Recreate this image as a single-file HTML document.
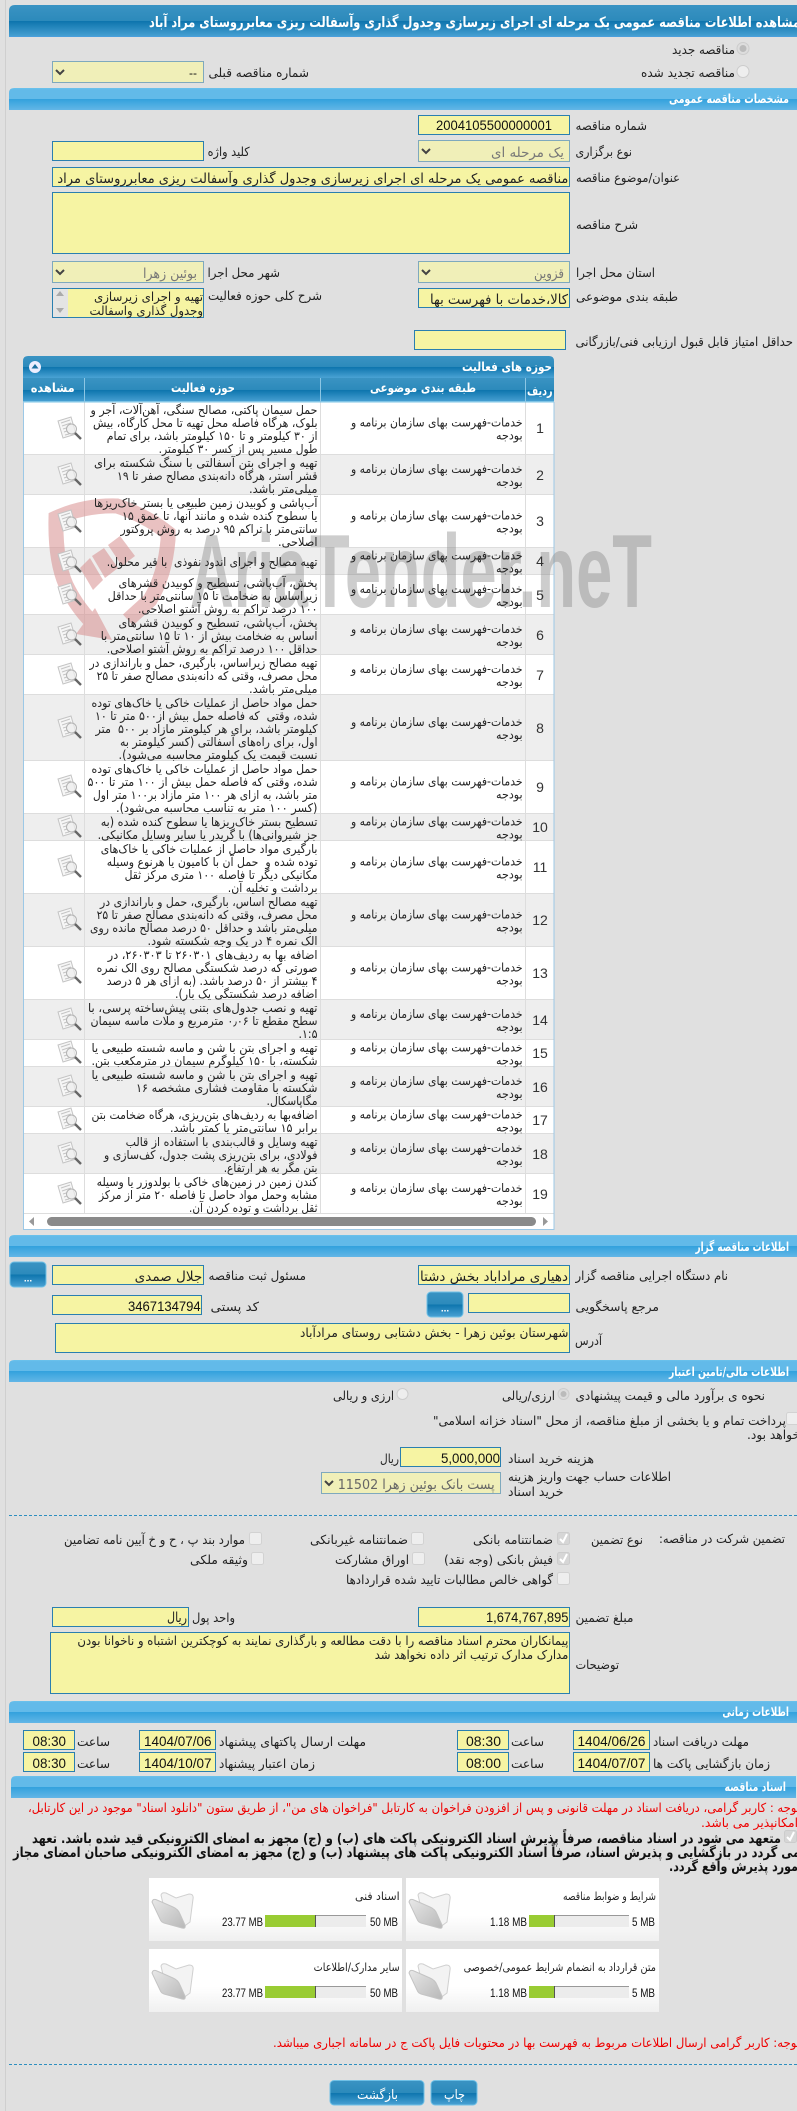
<!DOCTYPE html>
<html lang="fa">
<head>
<meta charset="utf-8">
<title>مشاهده اطلاعات مناقصه عمومی</title>
<style>
html,body{margin:0;padding:0;background:#e0e0e0;width:797px;height:2111px;overflow:hidden}
svg{display:block;position:absolute;left:0;top:0}
text{font-family:"DejaVu Sans",sans-serif;font-size:12.5px;fill:#222;direction:rtl;white-space:pre}
.m{font-size:12px}
.b{font-size:13.5px}
.g{font-size:13.5px;fill:#777}
.w{fill:#fff;font-weight:bold;font-size:12.5px}
.r{fill:#e00;font-size:12.5px}
.k{font-weight:bold;font-size:13.5px;fill:#111}
.c{font-size:11.5px}
.l{font-family:"Liberation Sans",sans-serif;font-size:14px;direction:ltr;fill:#111}
.n{font-family:"Liberation Sans",sans-serif;font-size:14px;direction:ltr;text-anchor:middle;fill:#333}
.s{font-family:"Liberation Sans",sans-serif;font-size:12px;direction:ltr;fill:#111}
.i{fill:#f6f4a3;stroke:#2a7fb0;stroke-width:1}
.d{fill:#f0efb8;stroke:#7fa9bd;stroke-width:1}
.cb{fill:#eee;stroke:#d2d2d2;stroke-width:1}
.ck{fill:#d6d6d6;stroke:#ccc;stroke-width:1}
.ch{fill:none;stroke:#444;stroke-width:2}
.tick{fill:none;stroke:#fff;stroke-width:2}
.wm{font-family:"Liberation Sans",sans-serif;font-weight:bold;font-size:104px;direction:ltr;fill:#888;fill-opacity:.42}
.dots{direction:ltr;text-anchor:middle;font-size:10px;font-weight:bold;fill:#fff;font-family:"Liberation Sans",sans-serif}
</style>
</head>
<body>
<svg xmlns="http://www.w3.org/2000/svg" width="797" height="2111" viewBox="0 0 797 2111">
<defs>
<linearGradient id="gd" x1="0" y1="0" x2="0" y2="1">
<stop offset="0" stop-color="#3a93c3"/><stop offset=".5" stop-color="#2c8abb"/><stop offset=".5" stop-color="#0c74ad"/><stop offset="1" stop-color="#4aa2d4"/>
</linearGradient>
<linearGradient id="gl" x1="0" y1="0" x2="0" y2="1">
<stop offset="0" stop-color="#6cc2ec"/><stop offset=".08" stop-color="#62bae9"/><stop offset=".5" stop-color="#62bae9"/><stop offset=".5" stop-color="#32a1dd"/><stop offset="1" stop-color="#62b6e6"/>
</linearGradient>
<linearGradient id="gc" x1="0" y1="0" x2="0" y2="1">
<stop offset="0" stop-color="#fff"/><stop offset=".6" stop-color="#fff"/><stop offset="1" stop-color="#f0f0f0"/>
</linearGradient>
<linearGradient id="gf" x1="0" y1="0" x2="1" y2="1">
<stop offset="0" stop-color="#e8e8e8"/><stop offset="1" stop-color="#b8b8b8"/>
</linearGradient>
<symbol id="doc" viewBox="0 0 25 23" width="25" height="23" overflow="visible">
<path d="M1 4 L14 0 L19 17 L6 21Z" fill="#f6f6f6" stroke="#c4c4c4"/>
<path d="M4 6 L13 3 M5 9 L14 6 M6 12 L11 10.5 M7 15 L10 14 M8 18 L12 17" stroke="#c4c4c4" fill="none"/>
<circle cx="14.5" cy="12" r="5" fill="#eee" fill-opacity=".7" stroke="#b4b4b4"/>
<path d="M18 16 L24 22" stroke="#666" stroke-width="2.4"/>
</symbol>
<symbol id="fold" viewBox="0 0 42 37" width="42" height="37" overflow="visible">
<path d="M9 3 Q10 0 14 1 L24 6 L37 2 Q42 2 41 7 L38 30 L30 36 L12 16Z" fill="#f3f3f3" stroke="#d0d0d0"/>
<path d="M0 10 Q1 6 5 8 L21 15 Q26 17 28 22 L33 33 Q34 37 30 36 L12 31 Q9 30 8 27 Z" fill="url(#gf)" stroke="#c4c4c4"/>
</symbol>
</defs>

<rect x="5" y="0" width="1" height="2111" fill="#cfcfcf"/>

<!-- title bar -->
<path d="M9 37V11Q9 5 15 5H797V37Z" fill="url(#gd)"/>
<rect x="9" y="36" width="788" height="1" fill="#4a9fdc"/>
<text x="800" y="27" class="w" style="font-size:14.5px" textLength="651" lengthAdjust="spacingAndGlyphs">مشاهده اطلاعات مناقصه عمومی یک مرحله ای اجرای زیرسازی وجدول گذاری وآسفالت ریزی معابرروستای مراد آباد</text>

<circle cx="743" cy="48.5" r="6" fill="#ddd" stroke="#ccc"/><circle cx="743" cy="48.5" r="3.5" fill="#bbb"/>
<text x="735" y="54" textLength="63" lengthAdjust="spacingAndGlyphs">مناقصه جدید</text>
<circle cx="743" cy="71.5" r="6" fill="#eee" stroke="#ccc"/>
<text x="735" y="77" textLength="94" lengthAdjust="spacingAndGlyphs">مناقصه تجدید شده</text>
<rect class="d" x="52.5" y="61.5" width="151" height="21"/>
<polyline class="ch" points="56,70 60,74 64,70"/>
<text x="197" y="77" class="s" style="direction:rtl">--</text>
<text x="309" y="77" textLength="100.5" lengthAdjust="spacingAndGlyphs">شماره مناقصه قبلی</text>

<!-- section 1 -->
<path d="M9 110V93Q9 88 14 88H797V110Z" fill="url(#gl)"/>
<text x="789" y="103" class="w" textLength="120" lengthAdjust="spacingAndGlyphs">مشخصات مناقصه عمومی</text>

<rect class="i" x="418.5" y="115.5" width="151" height="19"/>
<text x="436" y="130" class="l" textLength="116" lengthAdjust="spacingAndGlyphs">2004105500000001</text>
<text x="647" y="130" textLength="71.5" lengthAdjust="spacingAndGlyphs">شماره مناقصه</text>

<rect class="d" x="418.5" y="140.5" width="151" height="21"/>
<polyline class="ch" points="422,149 426,153 430,149"/>
<text x="564" y="157" class="g" textLength="73" lengthAdjust="spacingAndGlyphs">یک مرحله ای</text>
<text x="632" y="156" textLength="56.5" lengthAdjust="spacingAndGlyphs">نوع برگزاری</text>
<rect class="i" x="52.5" y="141.5" width="151" height="19"/>
<text x="249.6" y="156" textLength="42" lengthAdjust="spacingAndGlyphs">کلید واژه</text>

<rect class="i" x="52.5" y="167.5" width="517" height="19"/>
<text x="568.4" y="183" class="b" textLength="511" lengthAdjust="spacingAndGlyphs">مناقصه عمومی یک مرحله ای اجرای زیرسازی وجدول گذاری وآسفالت ریزی معابرروستای مراد</text>
<text x="680" y="182" textLength="104" lengthAdjust="spacingAndGlyphs">عنوان/موضوع مناقصه</text>

<rect class="i" x="52.5" y="192.5" width="517" height="61"/>
<text x="638" y="229" textLength="62" lengthAdjust="spacingAndGlyphs">شرح مناقصه</text>

<rect class="d" x="418.5" y="261.5" width="151" height="21"/>
<polyline class="ch" points="422,270 426,274 430,270"/>
<text x="564" y="278" class="g" textLength="30" lengthAdjust="spacingAndGlyphs">قزوین</text>
<text x="655" y="277" textLength="79" lengthAdjust="spacingAndGlyphs">استان محل اجرا</text>
<rect class="d" x="52.5" y="261.5" width="151" height="21"/>
<polyline class="ch" points="56,270 60,274 64,270"/>
<text x="197" y="278" class="g" textLength="54" lengthAdjust="spacingAndGlyphs">بوئین زهرا</text>
<text x="280" y="277" textLength="72.5" lengthAdjust="spacingAndGlyphs">شهر محل اجرا</text>

<rect class="i" x="418.5" y="288.5" width="151" height="19"/>
<text x="568" y="304" class="b" textLength="138" lengthAdjust="spacingAndGlyphs">کالا،خدمات با فهرست بها</text>
<text x="678" y="301" textLength="102" lengthAdjust="spacingAndGlyphs">طبقه بندی موضوعی</text>
<rect class="i" x="52.5" y="288.5" width="151" height="29"/>
<rect x="53" y="289" width="15" height="28" fill="#e4e4e4"/>
<path d="M60 291 L64 296 H56Z M56 308 H64 L60 313Z" fill="#aaa"/>
<text x="203" y="301" textLength="109" lengthAdjust="spacingAndGlyphs">تهیه و اجرای زیرسازی</text>
<text x="203" y="315" textLength="113.5" lengthAdjust="spacingAndGlyphs">وجدول گذاری واسفالت</text>
<text x="322" y="300" textLength="114" lengthAdjust="spacingAndGlyphs">شرح کلی حوزه فعالیت</text>

<rect class="i" x="414.5" y="330.5" width="151" height="19"/>
<text x="793" y="346" textLength="217.5" lengthAdjust="spacingAndGlyphs">حداقل امتیاز قابل قبول ارزیابی فنی/بازرگانی</text>

<!-- activities panel -->
<rect x="23" y="402" width="531" height="827" fill="#fff"/>
<rect x="23" y="455" width="531" height="40" fill="#eee"/>
<rect x="23" y="548" width="531" height="27" fill="#eee"/>
<rect x="23" y="615" width="531" height="40" fill="#eee"/>
<rect x="23" y="695" width="531" height="66" fill="#eee"/>
<rect x="23" y="814" width="531" height="27" fill="#eee"/>
<rect x="23" y="894" width="531" height="53" fill="#eee"/>
<rect x="23" y="1000" width="531" height="40" fill="#eee"/>
<rect x="23" y="1067" width="531" height="40" fill="#eee"/>
<rect x="23" y="1134" width="531" height="40" fill="#eee"/>
<path d="M23 454.5H554M23 494.5H554M23 547.5H554M23 574.5H554M23 614.5H554M23 654.5H554M23 694.5H554M23 760.5H554M23 813.5H554M23 840.5H554M23 893.5H554M23 946.5H554M23 999.5H554M23 1039.5H554M23 1066.5H554M23 1106.5H554M23 1133.5H554M23 1173.5H554M23 1213.5H554" stroke="#ddd" fill="none"/>
<path d="M84.5 402V1214M320.5 402V1214M525.5 402V1214" stroke="#ddd" fill="none"/>
<path d="M23 378V361Q23 356 28 356H549Q554 356 554 361V378Z" fill="url(#gd)"/>
<rect x="23" y="378" width="531" height="24" fill="url(#gd)"/>
<rect x="23" y="401" width="531" height="1.5" fill="#7fc4e6"/>
<path d="M84.5 378V402M320.5 378V402M525.5 378V402" stroke="#8cc6e4" fill="none"/>
<rect x="23" y="402" width="1" height="828" fill="#9cc8e6"/>
<rect x="553.5" y="402" width="1" height="828" fill="#9cc8e6"/>
<rect x="23" y="1229" width="531" height="1" fill="#9cc8e6"/>
<circle cx="35" cy="367" r="6" fill="#eef"/>
<path d="M35 364 L38.5 368.5 H31.5Z" fill="#1b6f9f"/>
<text x="552" y="371" class="w" textLength="90" lengthAdjust="spacingAndGlyphs">حوزه های فعالیت</text>
<text x="74.7" y="392" class="w" textLength="44" lengthAdjust="spacingAndGlyphs">مشاهده</text>
<text x="235" y="392" class="w" textLength="64" lengthAdjust="spacingAndGlyphs">حوزه فعالیت</text>
<text x="476" y="392" class="w" textLength="106" lengthAdjust="spacingAndGlyphs">طبقه بندی موضوعی</text>
<text x="552.6" y="395" class="w" textLength="25.6" lengthAdjust="spacingAndGlyphs">ردیف</text>

<!-- watermark -->
<g opacity=".55">
<path d="M128 620 L150 600 Q165 575 168 540 L168 533 Q145 515 117 506 Q85 505 56 518 Q55 560 66 585 Q78 610 97 627" fill="none" stroke="#d88f8f" stroke-width="15"/>
<polygon points="112,640 76,634 95,608" fill="#d88f8f"/>
<polygon points="80,568 90,558 103,580 93,590" fill="#d88f8f"/>
<polygon points="92,556 104,548 118,568 105,578" fill="#d88f8f"/>
<polygon points="108,545 120,536 135,556 122,566" fill="#d88f8f"/>
</g>
<text x="190" y="607" class="wm" textLength="118" lengthAdjust="spacingAndGlyphs">Aria</text>
<text x="310" y="607" class="wm" textLength="342" lengthAdjust="spacingAndGlyphs">Tender.neT</text>

<!-- table icons -->
<use href="#doc" x="57" y="417"/>
<use href="#doc" x="57" y="463"/>
<use href="#doc" x="57" y="510"/>
<use href="#doc" x="57" y="550"/>
<use href="#doc" x="57" y="583"/>
<use href="#doc" x="57" y="623"/>
<use href="#doc" x="57" y="663"/>
<use href="#doc" x="57" y="716"/>
<use href="#doc" x="57" y="775"/>
<use href="#doc" x="57" y="815"/>
<use href="#doc" x="57" y="855"/>
<use href="#doc" x="57" y="908"/>
<use href="#doc" x="57" y="961"/>
<use href="#doc" x="57" y="1008"/>
<use href="#doc" x="57" y="1041"/>
<use href="#doc" x="57" y="1075"/>
<use href="#doc" x="57" y="1108"/>
<use href="#doc" x="57" y="1142"/>
<use href="#doc" x="57" y="1182"/>

<!-- row numbers -->
<text x="540" y="433" class="n">1</text>
<text x="540" y="480" class="n">2</text>
<text x="540" y="526" class="n">3</text>
<text x="540" y="566" class="n">4</text>
<text x="540" y="600" class="n">5</text>
<text x="540" y="640" class="n">6</text>
<text x="540" y="680" class="n">7</text>
<text x="540" y="733" class="n">8</text>
<text x="540" y="792" class="n">9</text>
<text x="540" y="832" class="n">10</text>
<text x="540" y="872" class="n">11</text>
<text x="540" y="925" class="n">12</text>
<text x="540" y="978" class="n">13</text>
<text x="540" y="1025" class="n">14</text>
<text x="540" y="1058" class="n">15</text>
<text x="540" y="1092" class="n">16</text>
<text x="540" y="1125" class="n">17</text>
<text x="540" y="1159" class="n">18</text>
<text x="540" y="1199" class="n">19</text>

<!-- category column -->
<g class="cat">
<text class="m" x="522.6" y="426.5" textLength="171.6" lengthAdjust="spacingAndGlyphs">خدمات-فهرست بهای سازمان برنامه و</text><text class="m" x="522.6" y="439.5" textLength="26.6" lengthAdjust="spacingAndGlyphs">بودجه</text>
<text class="m" x="522.6" y="473" textLength="171.6" lengthAdjust="spacingAndGlyphs">خدمات-فهرست بهای سازمان برنامه و</text><text class="m" x="522.6" y="486" textLength="26.6" lengthAdjust="spacingAndGlyphs">بودجه</text>
<text class="m" x="522.6" y="519.5" textLength="171.6" lengthAdjust="spacingAndGlyphs">خدمات-فهرست بهای سازمان برنامه و</text><text class="m" x="522.6" y="532.5" textLength="26.6" lengthAdjust="spacingAndGlyphs">بودجه</text>
<text class="m" x="522.6" y="559.5" textLength="171.6" lengthAdjust="spacingAndGlyphs">خدمات-فهرست بهای سازمان برنامه و</text><text class="m" x="522.6" y="572.5" textLength="26.6" lengthAdjust="spacingAndGlyphs">بودجه</text>
<text class="m" x="522.6" y="593" textLength="171.6" lengthAdjust="spacingAndGlyphs">خدمات-فهرست بهای سازمان برنامه و</text><text class="m" x="522.6" y="606" textLength="26.6" lengthAdjust="spacingAndGlyphs">بودجه</text>
<text class="m" x="522.6" y="633" textLength="171.6" lengthAdjust="spacingAndGlyphs">خدمات-فهرست بهای سازمان برنامه و</text><text class="m" x="522.6" y="646" textLength="26.6" lengthAdjust="spacingAndGlyphs">بودجه</text>
<text class="m" x="522.6" y="673" textLength="171.6" lengthAdjust="spacingAndGlyphs">خدمات-فهرست بهای سازمان برنامه و</text><text class="m" x="522.6" y="686" textLength="26.6" lengthAdjust="spacingAndGlyphs">بودجه</text>
<text class="m" x="522.6" y="726" textLength="171.6" lengthAdjust="spacingAndGlyphs">خدمات-فهرست بهای سازمان برنامه و</text><text class="m" x="522.6" y="739" textLength="26.6" lengthAdjust="spacingAndGlyphs">بودجه</text>
<text class="m" x="522.6" y="785.5" textLength="171.6" lengthAdjust="spacingAndGlyphs">خدمات-فهرست بهای سازمان برنامه و</text><text class="m" x="522.6" y="798.5" textLength="26.6" lengthAdjust="spacingAndGlyphs">بودجه</text>
<text class="m" x="522.6" y="825.5" textLength="171.6" lengthAdjust="spacingAndGlyphs">خدمات-فهرست بهای سازمان برنامه و</text><text class="m" x="522.6" y="838.5" textLength="26.6" lengthAdjust="spacingAndGlyphs">بودجه</text>
<text class="m" x="522.6" y="865.5" textLength="171.6" lengthAdjust="spacingAndGlyphs">خدمات-فهرست بهای سازمان برنامه و</text><text class="m" x="522.6" y="878.5" textLength="26.6" lengthAdjust="spacingAndGlyphs">بودجه</text>
<text class="m" x="522.6" y="918.5" textLength="171.6" lengthAdjust="spacingAndGlyphs">خدمات-فهرست بهای سازمان برنامه و</text><text class="m" x="522.6" y="931.5" textLength="26.6" lengthAdjust="spacingAndGlyphs">بودجه</text>
<text class="m" x="522.6" y="971.5" textLength="171.6" lengthAdjust="spacingAndGlyphs">خدمات-فهرست بهای سازمان برنامه و</text><text class="m" x="522.6" y="984.5" textLength="26.6" lengthAdjust="spacingAndGlyphs">بودجه</text>
<text class="m" x="522.6" y="1018" textLength="171.6" lengthAdjust="spacingAndGlyphs">خدمات-فهرست بهای سازمان برنامه و</text><text class="m" x="522.6" y="1031" textLength="26.6" lengthAdjust="spacingAndGlyphs">بودجه</text>
<text class="m" x="522.6" y="1051.5" textLength="171.6" lengthAdjust="spacingAndGlyphs">خدمات-فهرست بهای سازمان برنامه و</text><text class="m" x="522.6" y="1064.5" textLength="26.6" lengthAdjust="spacingAndGlyphs">بودجه</text>
<text class="m" x="522.6" y="1085" textLength="171.6" lengthAdjust="spacingAndGlyphs">خدمات-فهرست بهای سازمان برنامه و</text><text class="m" x="522.6" y="1098" textLength="26.6" lengthAdjust="spacingAndGlyphs">بودجه</text>
<text class="m" x="522.6" y="1118.5" textLength="171.6" lengthAdjust="spacingAndGlyphs">خدمات-فهرست بهای سازمان برنامه و</text><text class="m" x="522.6" y="1131.5" textLength="26.6" lengthAdjust="spacingAndGlyphs">بودجه</text>
<text class="m" x="522.6" y="1152" textLength="171.6" lengthAdjust="spacingAndGlyphs">خدمات-فهرست بهای سازمان برنامه و</text><text class="m" x="522.6" y="1165" textLength="26.6" lengthAdjust="spacingAndGlyphs">بودجه</text>
<text class="m" x="522.6" y="1192" textLength="171.6" lengthAdjust="spacingAndGlyphs">خدمات-فهرست بهای سازمان برنامه و</text><text class="m" x="522.6" y="1205" textLength="26.6" lengthAdjust="spacingAndGlyphs">بودجه</text>
</g>

<!-- activity column -->
<text class="m" x="317.5" y="414" textLength="227" lengthAdjust="spacingAndGlyphs">حمل سیمان پاکتی، مصالح سنگی، آهن‌آلات، آجر و</text>
<text class="m" x="317.5" y="427" textLength="224.5" lengthAdjust="spacingAndGlyphs">بلوک، هرگاه فاصله محل تهیه تا محل کارگاه، بیش</text>
<text class="m" x="317.5" y="440" textLength="210.7" lengthAdjust="spacingAndGlyphs">از ۳۰ کیلومتر و تا ۱۵۰ کیلومتر باشد، برای تمام</text>
<text class="m" x="317.5" y="453" textLength="158.9" lengthAdjust="spacingAndGlyphs">طول مسیر پس از کسر ۳۰ کیلومتر.</text>

<text class="m" x="317.5" y="467" textLength="223.5" lengthAdjust="spacingAndGlyphs">تهیه و اجرای بتن آسفالتی با سنگ شکسته برای</text>
<text class="m" x="317.5" y="480" textLength="200.5" lengthAdjust="spacingAndGlyphs">قشر استر، هرگاه دانه‌بندی مصالح صفر تا ۱۹</text>
<text class="m" x="317.5" y="493" textLength="68.5" lengthAdjust="spacingAndGlyphs">میلی‌متر باشد.</text>

<text class="m" x="317.5" y="507" textLength="223.5" lengthAdjust="spacingAndGlyphs">آب‌پاشی و کوبیدن زمین طبیعی یا بستر خاک‌ریزها</text>
<text class="m" x="317.5" y="520" textLength="195.5" lengthAdjust="spacingAndGlyphs">یا سطوح کنده شده و مانند آنها، تا عمق ۱۵</text>
<text class="m" x="317.5" y="533" textLength="197" lengthAdjust="spacingAndGlyphs">سانتی‌متر با تراکم ۹۵ درصد به روش پروکتور</text>
<text class="m" x="317.5" y="546" textLength="39.5" lengthAdjust="spacingAndGlyphs">اصلاحی.</text>

<text class="m" x="317.5" y="566" textLength="210.7" lengthAdjust="spacingAndGlyphs">تهیه مصالح و اجرای اندود نفوذی  با قیر محلول.</text>

<text class="m" x="317.5" y="587" textLength="199" lengthAdjust="spacingAndGlyphs">پخش، آب‌پاشی، تسطیح و کوبیدن قشرهای</text>
<text class="m" x="317.5" y="600" textLength="209.7" lengthAdjust="spacingAndGlyphs">زیراساس به ضخامت تا ۱۵ سانتی‌متر با حداقل</text>
<text class="m" x="317.5" y="613" textLength="179.5" lengthAdjust="spacingAndGlyphs">۱۰۰ درصد تراکم به روش آشتو اصلاحی.</text>

<text class="m" x="317.5" y="627" textLength="199" lengthAdjust="spacingAndGlyphs">پخش، آب‌پاشی، تسطیح و کوبیدن قشرهای</text>
<text class="m" x="317.5" y="640" textLength="216.8" lengthAdjust="spacingAndGlyphs">اساس به ضخامت بیش از ۱۰ تا ۱۵ سانتی‌متر با</text>
<text class="m" x="317.5" y="653" textLength="210.7" lengthAdjust="spacingAndGlyphs">حداقل ۱۰۰ درصد تراکم به روش آشتو اصلاحی.</text>

<text class="m" x="317.5" y="667" textLength="228" lengthAdjust="spacingAndGlyphs">تهیه مصالح زیراساس، بارگیری، حمل و باراندازی در</text>
<text class="m" x="317.5" y="680" textLength="220.9" lengthAdjust="spacingAndGlyphs">محل مصرف، وقتی که دانه‌بندی مصالح صفر تا ۲۵</text>
<text class="m" x="317.5" y="693" textLength="68.5" lengthAdjust="spacingAndGlyphs">میلی‌متر باشد.</text>

<text class="m" x="317.5" y="707" textLength="226" lengthAdjust="spacingAndGlyphs">حمل مواد حاصل از عملیات خاکی یا خاک‌های توده</text>
<text class="m" x="317.5" y="720" textLength="222.5" lengthAdjust="spacingAndGlyphs">شده، وقتی  که فاصله حمل بیش از۵۰۰ متر تا ۱۰</text>
<text class="m" x="317.5" y="733" textLength="222" lengthAdjust="spacingAndGlyphs">کیلومتر باشد، برای هر کیلومتر مازاد بر ۵۰۰  متر</text>
<text class="m" x="317.5" y="746" textLength="197.5" lengthAdjust="spacingAndGlyphs">اول، برای راه‌های آسفالتی (کسر کیلومتر به</text>
<text class="m" x="317.5" y="759" textLength="199" lengthAdjust="spacingAndGlyphs">نسبت قیمت یک کیلومتر محاسبه می‌شود).</text>

<text class="m" x="317.5" y="773" textLength="226" lengthAdjust="spacingAndGlyphs">حمل مواد حاصل از عملیات خاکی یا خاک‌های توده</text>
<text class="m" x="317.5" y="786" textLength="230" lengthAdjust="spacingAndGlyphs">شده، وقتی که فاصله حمل بیش از ۱۰۰ متر تا ۵۰۰</text>
<text class="m" x="317.5" y="799" textLength="224.5" lengthAdjust="spacingAndGlyphs">متر باشد، به ازای هر ۱۰۰ متر مازاد بر۱۰۰ متر اول</text>
<text class="m" x="317.5" y="812" textLength="201.5" lengthAdjust="spacingAndGlyphs">(کسر ۱۰۰ متر به تناسب محاسبه می‌شود).</text>

<text class="m" x="317.5" y="826" textLength="216.8" lengthAdjust="spacingAndGlyphs">تسطیح بستر خاک‌ریزها یا سطوح کنده شده (به</text>
<text class="m" x="317.5" y="839" textLength="219.9" lengthAdjust="spacingAndGlyphs">جز شیروانی‌ها) با گریدر یا سایر وسایل مکانیکی.</text>

<text class="m" x="317.5" y="853" textLength="216.8" lengthAdjust="spacingAndGlyphs">بارگیری مواد حاصل از عملیات خاکی یا خاک‌های</text>
<text class="m" x="317.5" y="866" textLength="210.7" lengthAdjust="spacingAndGlyphs">توده شده و  حمل آن با کامیون یا هرنوع وسیله</text>
<text class="m" x="317.5" y="879" textLength="192.9" lengthAdjust="spacingAndGlyphs">مکانیکی دیگر تا فاصله ۱۰۰ متری مرکز ثقل</text>
<text class="m" x="317.5" y="892" textLength="89.7" lengthAdjust="spacingAndGlyphs">برداشت و تخلیه آن.</text>

<text class="m" x="317.5" y="906" textLength="217.5" lengthAdjust="spacingAndGlyphs">تهیه مصالح اساس، بارگیری، حمل و باراندازی در</text>
<text class="m" x="317.5" y="919" textLength="220.9" lengthAdjust="spacingAndGlyphs">محل مصرف، وقتی که دانه‌بندی مصالح صفر تا ۲۵</text>
<text class="m" x="317.5" y="932" textLength="227.5" lengthAdjust="spacingAndGlyphs">میلی‌متر باشد و حداقل ۵۰ درصد مصالح مانده روی</text>
<text class="m" x="317.5" y="945" textLength="170" lengthAdjust="spacingAndGlyphs">الک نمره ۴ در یک وجه شکسته شود.</text>

<text class="m" x="317.5" y="959" textLength="209.7" lengthAdjust="spacingAndGlyphs">اضافه بها به ردیف‌های ۲۶۰۳۰۱ تا ۲۶۰۳۰۳، در</text>
<text class="m" x="317.5" y="972" textLength="220.9" lengthAdjust="spacingAndGlyphs">صورتی که درصد شکستگی مصالح روی الک نمره</text>
<text class="m" x="317.5" y="985" textLength="210.7" lengthAdjust="spacingAndGlyphs">۴ بیشتر از ۵۰ درصد باشد. (به ازای هر ۵ درصد</text>
<text class="m" x="317.5" y="998" textLength="142.5" lengthAdjust="spacingAndGlyphs">اضافه درصد شکستگی یک بار).</text>

<text class="m" x="317.5" y="1012" textLength="229.5" lengthAdjust="spacingAndGlyphs">تهیه و نصب جدول‌های بتنی پیش‌ساخته پرسی، با</text>
<text class="m" x="317.5" y="1025" textLength="227" lengthAdjust="spacingAndGlyphs">سطح مقطع تا ۰٫۰۶ مترمربع و ملات ماسه سیمان</text>
<text class="m" x="317.5" y="1038" textLength="19" lengthAdjust="spacingAndGlyphs">۱:۵.</text>

<text class="m" x="317.5" y="1052" textLength="226" lengthAdjust="spacingAndGlyphs">تهیه و اجرای بتن با شن و ماسه شسته طبیعی یا</text>
<text class="m" x="317.5" y="1065" textLength="226" lengthAdjust="spacingAndGlyphs">شکسته، با ۱۵۰ کیلوگرم سیمان در مترمکعب بتن.</text>

<text class="m" x="317.5" y="1079" textLength="226" lengthAdjust="spacingAndGlyphs">تهیه و اجرای بتن با شن و ماسه شسته طبیعی یا</text>
<text class="m" x="317.5" y="1092" textLength="181.5" lengthAdjust="spacingAndGlyphs">شکسته با مقاومت فشاری مشخصه ۱۶</text>
<text class="m" x="317.5" y="1105" textLength="51" lengthAdjust="spacingAndGlyphs">مگاپاسکال.</text>

<text class="m" x="317.5" y="1119" textLength="226" lengthAdjust="spacingAndGlyphs">اضافه‌بها به ردیف‌های بتن‌ریزی، هرگاه ضخامت بتن</text>
<text class="m" x="317.5" y="1132" textLength="147.5" lengthAdjust="spacingAndGlyphs">برابر ۱۵ سانتی‌متر یا کمتر باشد.</text>

<text class="m" x="317.5" y="1146" textLength="191.9" lengthAdjust="spacingAndGlyphs">تهیه وسایل و قالب‌بندی با استفاده از قالب</text>
<text class="m" x="317.5" y="1159" textLength="213.5" lengthAdjust="spacingAndGlyphs">فولادی، برای بتن‌ریزی پشت جدول، کف‌سازی و</text>
<text class="m" x="317.5" y="1172" textLength="93.8" lengthAdjust="spacingAndGlyphs">بتن مگر به هر ارتفاع.</text>

<text class="m" x="317.5" y="1186" textLength="220.9" lengthAdjust="spacingAndGlyphs">کندن زمین در زمین‌های خاکی با بولدوزر یا وسیله</text>
<text class="m" x="317.5" y="1199" textLength="218.5" lengthAdjust="spacingAndGlyphs">مشابه وحمل مواد حاصل تا فاصله ۲۰ متر از مرکز</text>
<text class="m" x="317.5" y="1212" textLength="128.5" lengthAdjust="spacingAndGlyphs">ثقل برداشت و توده کردن آن.</text>

<!-- h-scrollbar -->
<path d="M34 1217 V1226 L29 1221.5Z M543 1217 V1226 L548 1221.5Z" fill="#999"/>
<rect x="47" y="1217" width="489" height="9" rx="4.5" fill="#8a8a8a"/>

<!-- section owner -->
<path d="M9 1257V1240Q9 1235 14 1235H797V1257Z" fill="url(#gl)"/>
<text x="789" y="1251" class="w" textLength="93.5" lengthAdjust="spacingAndGlyphs">اطلاعات مناقصه گزار</text>

<rect class="i" x="418.5" y="1265.5" width="151" height="19"/>
<text x="568" y="1281" class="b" textLength="148" lengthAdjust="spacingAndGlyphs">دهیاری مراداباد بخش دشتا</text>
<text x="728" y="1280" textLength="152.5" lengthAdjust="spacingAndGlyphs">نام دستگاه اجرایی مناقصه گزار</text>
<rect class="i" x="52.5" y="1265.5" width="151" height="19"/>
<text x="202.3" y="1281" class="b" textLength="67.6" lengthAdjust="spacingAndGlyphs">جلال صمدی</text>
<text x="306" y="1280" textLength="97.5" lengthAdjust="spacingAndGlyphs">مسئول ثبت مناقصه</text>
<rect x="10" y="1262" width="36" height="25" rx="4" fill="url(#gd)" stroke="#6fc0e6"/>
<text x="28" y="1281.5" class="dots">...</text>

<rect class="i" x="468.5" y="1293.5" width="101" height="19"/>
<text x="659" y="1311" textLength="83.5" lengthAdjust="spacingAndGlyphs">مرجع پاسخگویی</text>
<rect x="427" y="1292" width="36" height="25" rx="4" fill="url(#gd)" stroke="#6fc0e6"/>
<text x="445" y="1311.5" class="dots">...</text>
<rect class="i" x="52.5" y="1295.5" width="149" height="19"/>
<text x="128" y="1311" class="l" textLength="72.7" lengthAdjust="spacingAndGlyphs">3467134794</text>
<text x="259" y="1311" textLength="48.5" lengthAdjust="spacingAndGlyphs">کد پستی</text>

<rect class="i" x="55.5" y="1323.5" width="514" height="29"/>
<text x="568.4" y="1337" textLength="268.4" lengthAdjust="spacingAndGlyphs">شهرستان بوئین زهرا - بخش دشتابی روستای مرادآباد</text>
<text x="602" y="1345" textLength="27" lengthAdjust="spacingAndGlyphs">آدرس</text>

<!-- finance -->
<path d="M9 1382V1365Q9 1360 14 1360H797V1382Z" fill="url(#gl)"/>
<text x="789" y="1376" class="w" textLength="120" lengthAdjust="spacingAndGlyphs">اطلاعات مالی/تامین اعتبار</text>

<text x="765" y="1400" textLength="189.5" lengthAdjust="spacingAndGlyphs">نحوه ی برآورد مالی و قیمت پیشنهادی</text>
<circle cx="563.5" cy="1394" r="5.5" fill="#ddd" stroke="#ccc"/><circle cx="563.5" cy="1394" r="3" fill="#bbb"/>
<text x="555" y="1400" textLength="53" lengthAdjust="spacingAndGlyphs">ارزی/ریالی</text>
<circle cx="402.5" cy="1394" r="5.5" fill="#eee" stroke="#ccc"/>
<text x="394" y="1400" textLength="61" lengthAdjust="spacingAndGlyphs">ارزی و ریالی</text>
<rect class="cb" x="786.5" y="1412.5" width="12" height="12" rx="2"/>
<text x="786" y="1425" textLength="353" lengthAdjust="spacingAndGlyphs">پرداخت تمام و یا بخشی از مبلغ مناقصه، از محل "اسناد خزانه اسلامی"</text>
<text x="800" y="1439" textLength="53" lengthAdjust="spacingAndGlyphs">خواهد بود.</text>

<rect class="i" x="400.5" y="1447.5" width="100" height="19"/>
<text x="441" y="1463" class="l" textLength="59" lengthAdjust="spacingAndGlyphs">5,000,000</text>
<text x="399" y="1463" textLength="19" lengthAdjust="spacingAndGlyphs">ریال</text>
<text x="594" y="1463" textLength="86" lengthAdjust="spacingAndGlyphs">هزینه خرید اسناد</text>
<text x="671" y="1481" textLength="163" lengthAdjust="spacingAndGlyphs">اطلاعات حساب جهت واریز هزینه</text>
<text x="563.5" y="1496" textLength="55.5" lengthAdjust="spacingAndGlyphs">خرید اسناد</text>
<rect class="d" x="321.5" y="1472.5" width="179" height="21"/>
<polyline class="ch" points="325,1481 329,1485 333,1481"/>
<text x="494.7" y="1489" class="g" style="fill:#666" textLength="157" lengthAdjust="spacingAndGlyphs">پست بانک بوئین زهرا 11502</text>

<path d="M9 1515.5H797" stroke="#2e8fbf" stroke-dasharray="3 2" fill="none"/>

<text x="785" y="1543" textLength="126" lengthAdjust="spacingAndGlyphs">تضمین شرکت در مناقصه:</text>
<text x="643" y="1544" textLength="52" lengthAdjust="spacingAndGlyphs">نوع تضمین</text>

<rect class="ck" x="557.5" y="1532.5" width="12" height="12" rx="2"/><polyline class="tick" points="560,1539 563,1542 567,1534"/>
<text x="553" y="1544" textLength="80" lengthAdjust="spacingAndGlyphs">ضمانتنامه بانکی</text>
<rect class="cb" x="411.5" y="1532.5" width="12" height="12" rx="2"/>
<text x="408" y="1544" textLength="98" lengthAdjust="spacingAndGlyphs">ضمانتنامه غیربانکی</text>
<rect class="cb" x="249.5" y="1532.5" width="12" height="12" rx="2"/>
<text x="245" y="1544" textLength="181" lengthAdjust="spacingAndGlyphs">موارد بند پ ، ح و خ آیین نامه تضامین</text>

<rect class="ck" x="557.5" y="1552.5" width="12" height="12" rx="2"/><polyline class="tick" points="560,1559 563,1562 567,1554"/>
<text x="553" y="1564" textLength="109" lengthAdjust="spacingAndGlyphs">فیش بانکی (وجه نقد)</text>
<rect class="cb" x="412.5" y="1552.5" width="12" height="12" rx="2"/>
<text x="409" y="1564" textLength="74" lengthAdjust="spacingAndGlyphs">اوراق مشارکت</text>
<rect class="cb" x="251.5" y="1552.5" width="12" height="12" rx="2"/>
<text x="248" y="1564" textLength="58" lengthAdjust="spacingAndGlyphs">وثیقه ملکی</text>

<rect class="cb" x="557.5" y="1572.5" width="12" height="12" rx="2"/>
<text x="553" y="1584" textLength="207" lengthAdjust="spacingAndGlyphs">گواهی خالص مطالبات تایید شده قراردادها</text>

<rect class="i" x="418.5" y="1607.5" width="151" height="19"/>
<text x="486" y="1622" class="l" textLength="82.4" lengthAdjust="spacingAndGlyphs">1,674,767,895</text>
<text x="633.5" y="1622" textLength="58" lengthAdjust="spacingAndGlyphs">مبلغ تضمین</text>
<rect class="i" x="52.5" y="1607.5" width="136" height="19"/>
<text x="187" y="1622" class="b" textLength="20" lengthAdjust="spacingAndGlyphs">ریال</text>
<text x="235" y="1622" textLength="43" lengthAdjust="spacingAndGlyphs">واحد پول</text>

<rect class="i" x="50.5" y="1632.5" width="519" height="61"/>
<text x="568.4" y="1645" textLength="491" lengthAdjust="spacingAndGlyphs">پیمانکاران محترم اسناد مناقصه را با دقت مطالعه و بارگذاری نمایند به کوچکترین اشتباه و ناخوانا بودن</text>
<text x="568.4" y="1659" textLength="193.7" lengthAdjust="spacingAndGlyphs">مدارک مدارک ترتیب اثر داده نخواهد شد</text>
<text x="619" y="1669" textLength="43.5" lengthAdjust="spacingAndGlyphs">توضیحات</text>

<!-- time -->
<path d="M9 1723V1706Q9 1701 14 1701H797V1723Z" fill="url(#gl)"/>
<text x="789" y="1716" class="w" textLength="66.6" lengthAdjust="spacingAndGlyphs">اطلاعات زمانی</text>

<rect class="i" x="573.5" y="1730.5" width="76" height="19"/>
<text x="577.5" y="1746" class="l" textLength="68" lengthAdjust="spacingAndGlyphs">1404/06/26</text>
<text x="749" y="1746" textLength="96" lengthAdjust="spacingAndGlyphs">مهلت دریافت اسناد</text>
<rect class="i" x="457.5" y="1730.5" width="51" height="19"/>
<text x="466" y="1746" class="l" textLength="35" lengthAdjust="spacingAndGlyphs">08:30</text>
<text x="544" y="1746" textLength="33" lengthAdjust="spacingAndGlyphs">ساعت</text>
<rect class="i" x="139.5" y="1730.5" width="76" height="19"/>
<text x="144" y="1746" class="l" textLength="67.5" lengthAdjust="spacingAndGlyphs">1404/07/06</text>
<text x="366" y="1746" textLength="147" lengthAdjust="spacingAndGlyphs">مهلت ارسال پاکتهای پیشنهاد</text>
<rect class="i" x="23.5" y="1730.5" width="51" height="19"/>
<text x="32.5" y="1746" class="l" textLength="33.5" lengthAdjust="spacingAndGlyphs">08:30</text>
<text x="110" y="1746" textLength="33" lengthAdjust="spacingAndGlyphs">ساعت</text>

<rect class="i" x="573.5" y="1752.5" width="76" height="19"/>
<text x="577.5" y="1768" class="l" textLength="68" lengthAdjust="spacingAndGlyphs">1404/07/07</text>
<text x="770" y="1768" textLength="117" lengthAdjust="spacingAndGlyphs">زمان بازگشایی پاکت ها</text>
<rect class="i" x="457.5" y="1752.5" width="51" height="19"/>
<text x="466" y="1768" class="l" textLength="35" lengthAdjust="spacingAndGlyphs">08:00</text>
<text x="544" y="1768" textLength="33" lengthAdjust="spacingAndGlyphs">ساعت</text>
<rect class="i" x="139.5" y="1752.5" width="76" height="19"/>
<text x="144" y="1768" class="l" textLength="67.5" lengthAdjust="spacingAndGlyphs">1404/10/07</text>
<text x="315" y="1768" textLength="96" lengthAdjust="spacingAndGlyphs">زمان اعتبار پیشنهاد</text>
<rect class="i" x="23.5" y="1752.5" width="51" height="19"/>
<text x="32.5" y="1768" class="l" textLength="33.5" lengthAdjust="spacingAndGlyphs">08:30</text>
<text x="110" y="1768" textLength="33" lengthAdjust="spacingAndGlyphs">ساعت</text>

<!-- documents -->
<path d="M11 1798V1781Q11 1776 16 1776H796V1798Z" fill="url(#gl)"/>
<text x="786" y="1791" class="w" textLength="61.5" lengthAdjust="spacingAndGlyphs">اسناد مناقصه</text>

<text x="800" y="1812" class="r" textLength="772" lengthAdjust="spacingAndGlyphs">توجه : کاربر گرامی، دریافت اسناد در مهلت قانونی و پس از افزودن فراخوان به کارتابل "فراخوان های من"، از طریق ستون "دانلود اسناد" موجود در این کارتابل،</text>
<text x="798" y="1827" class="r" textLength="97" lengthAdjust="spacingAndGlyphs">امکانپذیر می باشد.</text>

<rect class="ck" x="784.5" y="1830.5" width="12" height="12" rx="2"/><polyline class="tick" points="787,1837 790,1840 794,1832"/>
<text x="781" y="1843" class="k" textLength="749" lengthAdjust="spacingAndGlyphs">متعهد می شود در اسناد مناقصه، صرفاً پذیرش اسناد الکترونیکی پاکت های (ب) و (ج) مجهز به امضای الکترونیکی قید شده باشد. تعهد</text>
<text x="800" y="1857" class="k" textLength="787" lengthAdjust="spacingAndGlyphs">می گردد در بازگشایی و پذیرش اسناد، صرفاً اسناد الکترونیکی پاکت های پیشنهاد (ب) و (ج) مجهز به امضای الکترونیکی صاحبان امضای مجاز</text>
<text x="798" y="1871" class="k" textLength="129" lengthAdjust="spacingAndGlyphs">مورد پذیرش واقع گردد.</text>

<!-- cards -->
<rect x="406" y="1878" width="253" height="63" fill="url(#gc)"/>
<rect x="149" y="1878" width="253" height="63" fill="url(#gc)"/>
<rect x="406" y="1949" width="253" height="63" fill="url(#gc)"/>
<rect x="149" y="1949" width="253" height="63" fill="url(#gc)"/>
<use href="#fold" x="409" y="1892"/>
<use href="#fold" x="152" y="1892"/>
<use href="#fold" x="409" y="1963"/>
<use href="#fold" x="152" y="1963"/>

<text x="656" y="1900" class="c" textLength="93" lengthAdjust="spacingAndGlyphs">شرایط و ضوابط مناقصه</text>
<rect x="529" y="1915" width="100" height="12" fill="#ececec"/><rect x="529" y="1915" width="100" height="1" fill="#999"/>
<rect x="529" y="1915" width="25" height="12" fill="#99cc33"/><rect x="554" y="1915" width="1" height="12" fill="#555"/>
<text x="632" y="1926" class="s" textLength="23" lengthAdjust="spacingAndGlyphs">5 MB</text>
<text x="490" y="1926" class="s" textLength="37" lengthAdjust="spacingAndGlyphs">1.18 MB</text>

<text x="399.6" y="1900" class="c" textLength="44.6" lengthAdjust="spacingAndGlyphs">اسناد فنی</text>
<rect x="265" y="1915" width="101" height="12" fill="#ececec"/><rect x="265" y="1915" width="101" height="1" fill="#999"/>
<rect x="265" y="1915" width="50" height="12" fill="#99cc33"/><rect x="315" y="1915" width="1" height="12" fill="#555"/>
<text x="370" y="1926" class="s" textLength="28" lengthAdjust="spacingAndGlyphs">50 MB</text>
<text x="222" y="1926" class="s" textLength="41" lengthAdjust="spacingAndGlyphs">23.77 MB</text>

<text x="656" y="1971" class="c" textLength="192.4" lengthAdjust="spacingAndGlyphs">متن قرارداد به انضمام شرایط عمومی/خصوصی</text>
<rect x="529" y="1986" width="100" height="12" fill="#ececec"/><rect x="529" y="1986" width="100" height="1" fill="#999"/>
<rect x="529" y="1986" width="25" height="12" fill="#99cc33"/><rect x="554" y="1986" width="1" height="12" fill="#555"/>
<text x="632" y="1997" class="s" textLength="23" lengthAdjust="spacingAndGlyphs">5 MB</text>
<text x="490" y="1997" class="s" textLength="37" lengthAdjust="spacingAndGlyphs">1.18 MB</text>

<text x="399.6" y="1971" class="c" textLength="86" lengthAdjust="spacingAndGlyphs">سایر مدارک/اطلاعات</text>
<rect x="265" y="1986" width="101" height="12" fill="#ececec"/><rect x="265" y="1986" width="101" height="1" fill="#999"/>
<rect x="265" y="1986" width="50" height="12" fill="#99cc33"/><rect x="315" y="1986" width="1" height="12" fill="#555"/>
<text x="370" y="1997" class="s" textLength="28" lengthAdjust="spacingAndGlyphs">50 MB</text>
<text x="222" y="1997" class="s" textLength="41" lengthAdjust="spacingAndGlyphs">23.77 MB</text>

<text x="800" y="2047" class="r" textLength="527" lengthAdjust="spacingAndGlyphs">توجه: کاربر گرامی ارسال اطلاعات مربوط به فهرست بها در محتویات فایل پاکت ج در سامانه اجباری میباشد.</text>

<path d="M9 2064.5H797" stroke="#2e8fbf" stroke-dasharray="3 2" fill="none"/>

<rect x="330" y="2080.5" width="94" height="24.5" rx="4" fill="url(#gd)" stroke="#6fc0e6"/>
<text x="398" y="2099" class="w" style="font-weight:normal;font-size:13px" textLength="41" lengthAdjust="spacingAndGlyphs">بازگشت</text>
<rect x="431" y="2080.5" width="46" height="24.5" rx="4" fill="url(#gd)" stroke="#6fc0e6"/>
<text x="465" y="2099" class="w" style="font-weight:normal;font-size:13px" textLength="21" lengthAdjust="spacingAndGlyphs">چاپ</text>
</svg>
</body>
</html>
